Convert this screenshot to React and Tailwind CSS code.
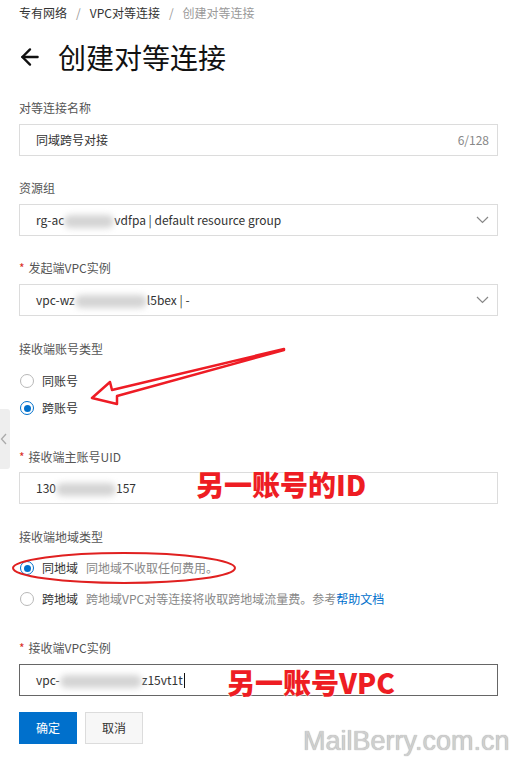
import { ArrowLeft } from 'lucide-react'

const font = "font-['Noto_Sans_CJK_SC','Noto_Sans',sans-serif]"

const Label = ({ children, required }) => (
  <div className="h-5 leading-5 text-xs text-[#555]">
    {required && <span className="text-[#d93026] mr-1">*</span>}
    {children}
  </div>
)

const Blur = ({ w }) => (
  <span className={`inline-block h-[13px] ${w} bg-[#d4d4d4] rounded-full blur-[3px] align-middle`} />
)

const Chevron = () => (
  <svg width="13" height="8" viewBox="0 0 13 8" className="text-[#888]">
    <polyline points="1,1 6.5,6.5 12,1" fill="none" stroke="currentColor" strokeWidth="1.2" />
  </svg>
)

const Radio = ({ checked, label, help, link }) => (
  <div className="h-5 flex items-center text-xs">
    {checked ? (
      <span className="ml-px w-[14px] h-[14px] rounded-full border-[1.5px] border-[#0070cc] flex items-center justify-center">
        <span className="w-[7px] h-[7px] rounded-full bg-[#0070cc]" />
      </span>
    ) : (
      <span className="ml-px w-[14px] h-[14px] rounded-full border border-[#b8b8b8] bg-white" />
    )}
    <span className="ml-2 text-[#333]">{label}</span>
    {help && (
      <span className="ml-2 text-[#888]">
        {help}
        {link && <span className="text-[#0070cc]">{link}</span>}
      </span>
    )}
  </div>
)

export default function App() {
  return (
    <div className={`relative w-[515px] h-[761px] overflow-hidden bg-white ${font}`}>
      <div className="pl-[19px] pr-[17px] pt-[3px]">
        <div className="h-5 leading-5 text-xs flex items-center">
          <span className="text-[#333]">专有网络</span>
          <span className="mx-[9px] text-[#999]">/</span>
          <span className="text-[#333]">VPC对等连接</span>
          <span className="mx-[9px] text-[#999]">/</span>
          <span className="text-[#999]">创建对等连接</span>
        </div>

        <div className="mt-[14px] h-10 flex items-center">
          <ArrowLeft size={26} strokeWidth={2.2} className="text-[#111] -ml-0.5" />
          <span className="ml-[15px] text-[28px] leading-10 text-[#111]">创建对等连接</span>
        </div>

        <div className="mt-[21px]">
          <Label>对等连接名称</Label>
          <div className="mt-[6px] h-8 border border-[#dcdcdc] flex items-center justify-between pl-4 pr-2 text-xs">
            <span className="text-[#333]">同域跨号对接</span>
            <span className="text-[#888]">6/128</span>
          </div>
        </div>

        <div className="mt-[22px]">
          <Label>资源组</Label>
          <div className="mt-[6px] h-8 border border-[#dcdcdc] flex items-center justify-between pl-4 pr-2 text-xs text-[#333]">
            <span>rg-ac<Blur w="w-[50px]" />vdfpa | default resource group</span>
            <Chevron />
          </div>
        </div>

        <div className="mt-[22px]">
          <Label required>发起端VPC实例</Label>
          <div className="mt-[6px] h-8 border border-[#dcdcdc] flex items-center justify-between pl-4 pr-2 text-xs text-[#333]">
            <span>vpc-wz<Blur w="w-[72px]" />l5bex | -</span>
            <Chevron />
          </div>
        </div>

        <div className="mt-[23px]">
          <Label>接收端账号类型</Label>
          <div className="mt-3">
            <Radio label="同账号" />
          </div>
          <div className="mt-[7px]">
            <Radio checked label="跨账号" />
          </div>
        </div>

        <div className="mt-[29px]">
          <Label required>接收端主账号UID</Label>
          <div className="mt-[5px] h-8 border border-[#dcdcdc] flex items-center pl-4 text-xs text-[#333]">
            <span>130<Blur w="w-[60px]" />157</span>
          </div>
        </div>

        <div className="mt-[23px]">
          <Label>接收端地域类型</Label>
          <div className="mt-[11px]">
            <Radio checked label="同地域" help="同地域不收取任何费用。" />
          </div>
          <div className="mt-[11px]">
            <Radio label="跨地域" help="跨地域VPC对等连接将收取跨地域流量费。参考" link="帮助文档" />
          </div>
        </div>

        <div className="mt-[29px]">
          <Label required>接收端VPC实例</Label>
          <div className="mt-[6px] h-8 border border-[#666] flex items-center pl-4 text-xs text-[#333]">
            <span>vpc-<Blur w="w-[82px]" />z15vt1t</span>
            <span className="ml-px w-px h-[15px] bg-[#111]" />
          </div>
        </div>

        <div className="mt-4 flex gap-2">
          <button className="w-[58px] h-8 bg-[#0070cc] text-white text-xs">确定</button>
          <button className="w-[58px] h-8 border border-[#dcdcdc] bg-[#f7f7f7] text-[#333] text-xs">取消</button>
        </div>
      </div>

      <div className="absolute left-0 top-[409px] w-[10px] h-[60px] bg-[#eeeeee] rounded-r-[3px] flex items-center">
        <svg width="8" height="12" viewBox="0 0 8 12" className="text-[#aaa]">
          <polyline points="6,1 1.5,6 6,11" fill="none" stroke="currentColor" strokeWidth="1.3" />
        </svg>
      </div>

      <svg className="absolute inset-0 pointer-events-none" width="515" height="761">
        <polygon
          points="284,349 112,390 110,382 92,398 117,404 117,396 284,350"
          fill="none"
          stroke="#ee1c25"
          strokeWidth="2.5"
          strokeLinejoin="round"
        />
        <ellipse cx="124" cy="568" rx="111" ry="15" fill="none" stroke="#e02020" strokeWidth="2" />
      </svg>

      <div className="absolute left-[196px] top-[470px] text-[28px] leading-none font-black text-[#ee1d23] [text-shadow:0_0_2px_#fff,0_0_2px_#fff]">
        另一账号的ID
      </div>
      <div className="absolute left-[227px] top-[668px] text-[28px] leading-none font-black text-[#ee1d23] [text-shadow:0_0_2px_#fff,0_0_2px_#fff]">
        另一账号VPC
      </div>

      <div className="absolute left-[303px] top-[728px] text-[27px] leading-none font-['Liberation_Sans',sans-serif] text-[#cfcfcf] [text-shadow:0_0_1px_#999]">
        MailBerry.com.cn
      </div>
    </div>
  )
}
